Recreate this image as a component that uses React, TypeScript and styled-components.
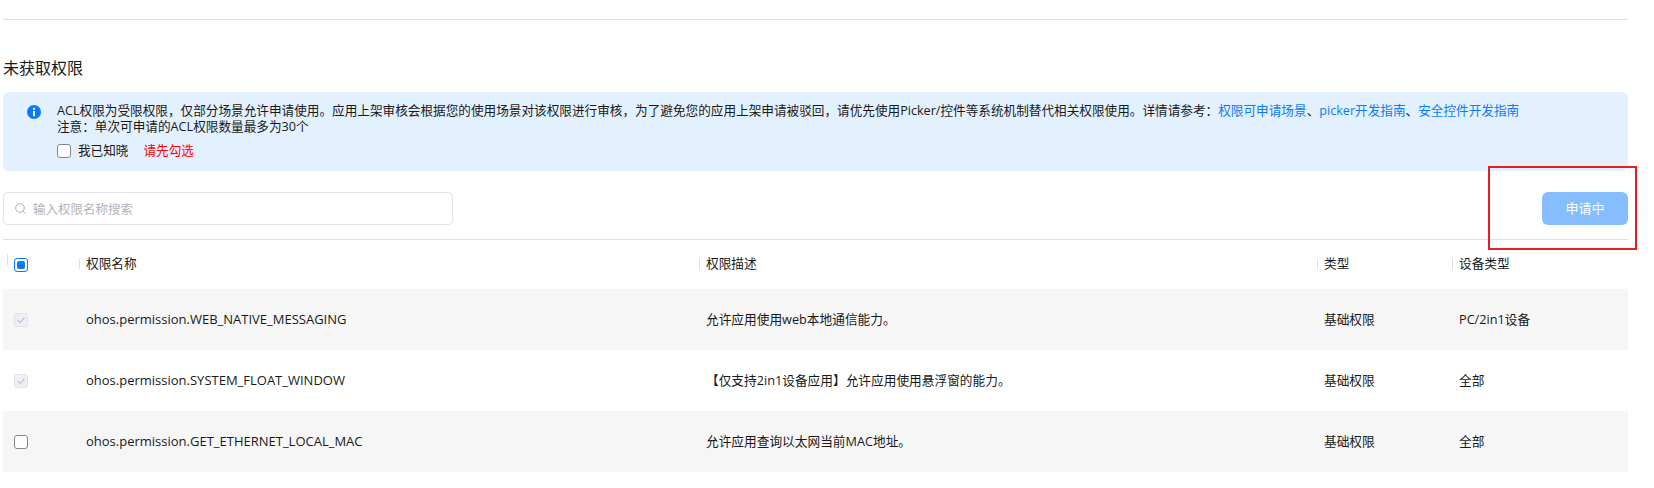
import React from "react";
import styled, { createGlobalStyle } from "styled-components";
import { Search } from "lucide-react";

const rows = [
    { name: "ohos.permission.WEB_NATIVE_MESSAGING", desc: "允许应用使用web本地通信能力。", type: "基础权限", device: "PC/2in1设备", state: "granted" },
    { name: "ohos.permission.SYSTEM_FLOAT_WINDOW", desc: "【仅支持2in1设备应用】允许应用使用悬浮窗的能力。", type: "基础权限", device: "全部", state: "granted" },
    { name: "ohos.permission.GET_ETHERNET_LOCAL_MAC", desc: "允许应用查询以太网当前MAC地址。", type: "基础权限", device: "全部", state: "empty" },
];

const GlobalStyle = createGlobalStyle`
    html, body {
        margin: 0;
        background: #fff;
    }
    body {
        font-family: "Open Sans", "Noto Sans CJK SC", sans-serif;
        color: #191919;
    }
`;

const InfoIcon = () => (
    <AlertIcon viewBox="0 0 14 14">
        <circle cx="7" cy="7" r="7" fill="#0a7bff" />
        <circle cx="7" cy="3.8" r="1.1" fill="#fff" />
        <rect x="6" y="5.8" width="2" height="5.4" rx="0.5" fill="#fff" />
    </AlertIcon>
);

const CheckMark = () => (
    <svg viewBox="0 0 14 14" width="14" height="14">
        <path d="M3 7.2 L6 10 L11 4.2" fill="none" stroke="#b9bcc6" strokeWidth="1.2" />
    </svg>
);

export default function App() {
    return (
        <>
            <GlobalStyle />
            <Page>
                <TopLine />
                <Title>未获取权限</Title>
                <Alert>
                    <InfoIcon />
                    <AlertBody>
                        <AlertLine>
                            ACL权限为受限权限，仅部分场景允许申请使用。应用上架审核会根据您的使用场景对该权限进行审核，为了避免您的应用上架申请被驳回，请优先使用Picker/控件等系统机制替代相关权限使用。详情请参考：
                            <AlertLink>权限可申请场景</AlertLink>、<AlertLink>picker开发指南</AlertLink>、<AlertLink>安全控件开发指南</AlertLink>
                        </AlertLine>
                        <AlertLine>注意：单次可申请的ACL权限数量最多为30个</AlertLine>
                        <AckRow>
                            <Box $state="empty" />
                            <span>我已知晓</span>
                            <Warning>请先勾选</Warning>
                        </AckRow>
                    </AlertBody>
                </Alert>
                <Toolbar>
                    <SearchBox>
                        <Search size={13} strokeWidth={1.3} color="#8f9299" />
                        <Placeholder>输入权限名称搜索</Placeholder>
                    </SearchBox>
                    <ApplyButton>申请中</ApplyButton>
                    <Highlight />
                </Toolbar>
                <Table>
                    <HeadRow>
                        <HeadCheckCell>
                            <Box $state="partial"><PartialDot /></Box>
                        </HeadCheckCell>
                        <HeadCell>权限名称</HeadCell>
                        <HeadCell>权限描述</HeadCell>
                        <HeadCell>类型</HeadCell>
                        <HeadCell>设备类型</HeadCell>
                    </HeadRow>
                    {rows.map((row, i) => (
                        <Row key={row.name} $shaded={i % 2 === 0}>
                            <CheckCell>
                                <Box $state={row.state}>{row.state === "granted" && <CheckMark />}</Box>
                            </CheckCell>
                            <NameCell>{row.name}</NameCell>
                            <Cell>{row.desc}</Cell>
                            <Cell>{row.type}</Cell>
                            <Cell>{row.device}</Cell>
                        </Row>
                    ))}
                </Table>
            </Page>
        </>
    );
}

const Page = styled.div`
    box-sizing: border-box;
    width: 1654px;
    height: 488px;
    padding: 19px 26px 0 3px;
    overflow: hidden;
`;

const TopLine = styled.div`
    height: 1px;
    background: #e0e0e0;
`;

const Title = styled.h2`
    margin: 37px 0 0;
    height: 35px;
    font-size: 16px;
    font-weight: 400;
    line-height: 22px;
`;

const Alert = styled.div`
    box-sizing: border-box;
    display: flex;
    height: 79px;
    padding: 11px 0 0 24px;
    gap: 16px;
    background: #e3f1fe;
    border-radius: 6px;
`;

const AlertIcon = styled.svg`
    flex: none;
    width: 14px;
    height: 14px;
    margin-top: 2px;
`;

const AlertBody = styled.div`
    font-size: 12.63px;
    line-height: 16px;
`;

const AlertLine = styled.div`
    white-space: nowrap;
`;

const AlertLink = styled.span`
    color: #0a7bff;
`;

const AckRow = styled.div`
    display: flex;
    align-items: center;
    gap: 7px;
    margin-top: 8px;
`;

const Warning = styled.span`
    margin-left: 8px;
    color: #ff0000;
`;

const Toolbar = styled.div`
    position: relative;
    display: flex;
    align-items: center;
    justify-content: space-between;
    height: 33px;
    margin-top: 21px;
    padding-bottom: 14px;
    border-bottom: 1px solid #e0e0e0;
`;

const SearchBox = styled.div`
    box-sizing: border-box;
    display: flex;
    align-items: center;
    gap: 6px;
    width: 450px;
    height: 33px;
    padding-left: 10px;
    border: 1px solid #e1e2ea;
    border-radius: 5px;
`;

const Placeholder = styled.span`
    font-size: 12.5px;
    color: #b2b3b8;
`;

const ApplyButton = styled.div`
    width: 86px;
    height: 33px;
    border-radius: 6px;
    background: #85bdff;
    color: #fff;
    font-size: 13px;
    line-height: 33px;
    text-align: center;
`;

const Highlight = styled.div`
    position: absolute;
    left: 1485px;
    top: -26px;
    width: 145px;
    height: 80px;
    border: 2px solid #ed1c24;
`;

const Table = styled.div`
    font-size: 12.7px;
`;

const columns = "76px 620px 618px 135px 1fr";

const HeadRow = styled.div`
    display: grid;
    grid-template-columns: ${columns};
    align-items: center;
    height: 49px;
`;

const HeadCheckCell = styled.div`
    position: relative;
    padding-left: 11px;
    &::before {
        content: "";
        position: absolute;
        left: 4px;
        top: -4px;
        width: 1px;
        height: 11px;
        background: #e0e0e0;
    }
`;

const HeadCell = styled.div`
    position: relative;
    padding: 0 0 3px 7px;
    line-height: 18px;
    &::before {
        content: "";
        position: absolute;
        left: 0;
        top: 5px;
        width: 1px;
        height: 10px;
        background: #e0e0e0;
    }
`;

const Row = styled.div<{ $shaded: boolean }>`
    display: grid;
    grid-template-columns: ${columns};
    align-items: center;
    height: 61px;
    background: ${(p) => (p.$shaded ? "#f6f6f6" : "#fff")};
`;

const CheckCell = styled.div`
    padding-left: 11px;
`;

const Cell = styled.div`
    padding: 0 0 2px 7px;
`;

const NameCell = styled(Cell)`
    font-size: 13px;
`;

const Box = styled.div<{ $state: string }>`
    box-sizing: border-box;
    display: flex;
    align-items: center;
    justify-content: center;
    width: 14px;
    height: 14px;
    border-radius: 3px;
    background: ${(p) => (p.$state === "granted" ? "#eef0f5" : "#fff")};
    border: 1px solid
        ${(p) => (p.$state === "partial" ? "#0a7bff" : p.$state === "granted" ? "#e1e3ec" : "#82858c")};
`;

const PartialDot = styled.div`
    width: 8px;
    height: 8px;
    border-radius: 2px;
    background: #0a7bff;
`;
